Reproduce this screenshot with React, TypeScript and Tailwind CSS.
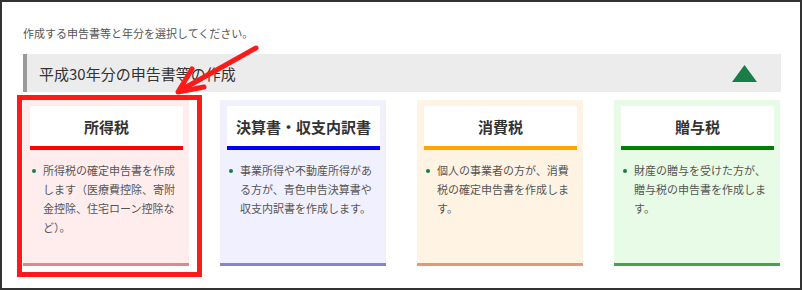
const cards = [
  {
    title: '所得税',
    text: '所得税の確定申告書を作成します（医療費控除、寄附金控除、住宅ローン控除など）。',
    bg: 'bg-[#ffeded]',
    bar: 'border-[#ff0000]',
    bottom: 'border-[#d98a8a]',
  },
  {
    title: '決算書・収支内訳書',
    text: '事業所得や不動産所得がある方が、青色申告決算書や収支内訳書を作成します。',
    bg: 'bg-[#f0f0ff]',
    bar: 'border-[#0000ff]',
    bottom: 'border-[#8585cc]',
  },
  {
    title: '消費税',
    text: '個人の事業者の方が、消費税の確定申告書を作成します。',
    bg: 'bg-[#fff4e4]',
    bar: 'border-[#ffa500]',
    bottom: 'border-[#dc9a7c]',
  },
  {
    title: '贈与税',
    text: '財産の贈与を受けた方が、贈与税の申告書を作成します。',
    bg: 'bg-[#e8fbe6]',
    bar: 'border-[#008000]',
    bottom: 'border-[#4f9d4f]',
  },
];

export default function App() {
  return (
    <div className="relative w-[802px] h-[290px] border-2 border-[#333] bg-white pl-[21px] pr-[19px] pt-[23px] font-['Noto_Sans_CJK_JP',sans-serif] text-[#333]">
      {/* Intro */}
      <p className="text-[11px] leading-[16px] text-[#555]">作成する申告書等と年分を選択してください。</p>

      {/* Section bar */}
      <div className="mt-[13px] h-[38px] flex items-center justify-between bg-[#ececec] border-l-4 border-[#9a9a9a] pl-[12px] pr-[24px]">
        <h2 className="text-[15px] leading-none text-[#333]">平成30年分の申告書等の作成</h2>
        <svg width="25" height="17" viewBox="0 0 25 17">
          <polygon points="12.5,0 25,17 0,17" fill="#1a7d48" />
        </svg>
      </div>

      {/* Cards */}
      <div className="mt-[8px] grid grid-cols-4 gap-[31px] w-[757px]">
        {cards.map((card) => (
          <div
            key={card.title}
            className={`h-[166px] flex flex-col border-b-[3px] ${card.bg} ${card.bottom}`}
          >
            <div
              className={`mt-[6px] ml-[7px] mr-[6px] h-[44px] bg-white border-b-4 ${card.bar} flex items-center justify-center`}
            >
              <h3 className="text-[15px] font-bold leading-none text-[#333]">{card.title}</h3>
            </div>
            <div className="flex pl-[9px] pr-[12px] pt-[11px]">
              <span className="flex-none w-[4px] h-[4px] mt-[8px] mr-[7px] rounded-full bg-[#1a7d48]" />
              <p className="text-[11px] leading-[19px] text-[#555]">{card.text}</p>
            </div>
          </div>
        ))}
      </div>

      {/* Annotation: red frame and arrow */}
      <div className="absolute left-[15px] top-[93px] w-[185px] h-[182px] border-[5px] border-[#ff1a1a] pointer-events-none" />
      <svg
        className="absolute left-[-2px] top-[-2px] pointer-events-none"
        width="802"
        height="290"
        viewBox="0 0 802 290"
      >
        <g stroke="#ff1a1a" strokeWidth="5" strokeLinecap="round" strokeLinejoin="round" fill="none">
          <line x1="256" y1="48" x2="181" y2="90" />
          <polyline points="204,87 178,92 192,69" />
        </g>
      </svg>
    </div>
  );
}
